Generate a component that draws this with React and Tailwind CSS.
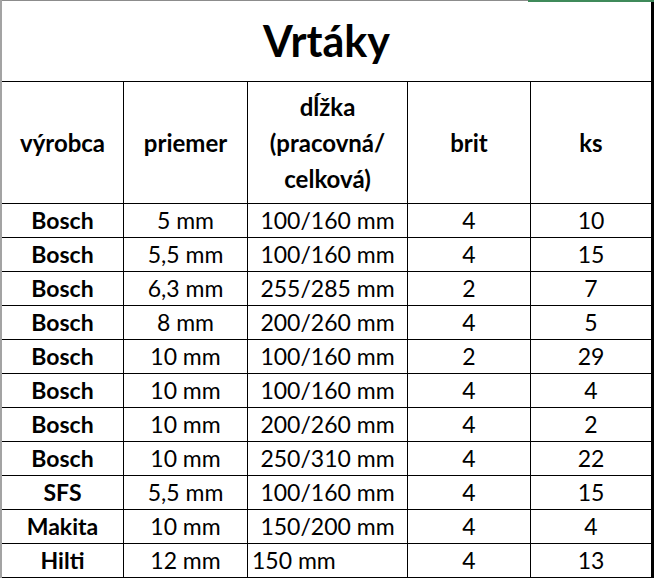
const COLS = 'grid grid-cols-[122px_124px_160px_123px_123px]'

const rows = [
  ['Bosch', '5 mm', '100/160 mm', '4', '10'],
  ['Bosch', '5,5 mm', '100/160 mm', '4', '15'],
  ['Bosch', '6,3 mm', '255/285 mm', '2', '7'],
  ['Bosch', '8 mm', '200/260 mm', '4', '5'],
  ['Bosch', '10 mm', '100/160 mm', '2', '29'],
  ['Bosch', '10 mm', '100/160 mm', '4', '4'],
  ['Bosch', '10 mm', '200/260 mm', '4', '2'],
  ['Bosch', '10 mm', '250/310 mm', '4', '22'],
  ['SFS', '5,5 mm', '100/160 mm', '4', '15'],
  ['Makita', '10 mm', '150/200 mm', '4', '4'],
  ['Hilti', '12 mm', '150 mm', '4', '13', true],
]

function Cell({ children, last, bold, left }) {
  return (
    <div
      className={
        'h-[34px] flex items-center border-b border-black ' +
        (last ? 'border-r-[3px] ' : 'border-r ') +
        (left ? 'justify-start pl-1 ' : 'justify-center ') +
        (bold ? 'font-bold' : 'font-normal')
      }
    >
      {children}
    </div>
  )
}

export default function App() {
  return (
    <div className="relative w-[654px] h-[578px] bg-white text-black font-['Lato','Noto_Sans',sans-serif] text-[23px] overflow-hidden">
      {/* výber v Exceli — zelený okraj hore vpravo */}
      <div className="absolute top-0 left-[528px] w-[126px] h-[2px] bg-[#3f8a5a]" />

      <div className="border-l-2 border-l-[#a3a3a3]">
        <div className="h-[82px] flex items-center justify-center border-t border-t-[#8c8c8c] border-b border-b-black border-r-[3px] border-r-black">
          <span className="text-[43px] font-bold leading-none pb-[2px]">Vrtáky</span>
        </div>

        <div className={COLS + ' font-bold text-[24px]'}>
          <div className="h-[122px] flex items-center justify-center border-r border-b border-black">výrobca</div>
          <div className="h-[122px] flex items-center justify-center border-r border-b border-black">priemer</div>
          <div className="h-[122px] flex flex-col items-center justify-center border-r border-b border-black leading-[36px]">
            <span>dĺžka</span>
            <span>(pracovná/</span>
            <span>celková)</span>
          </div>
          <div className="h-[122px] flex items-center justify-center border-r border-b border-black">brit</div>
          <div className="h-[122px] flex items-center justify-center border-r-[3px] border-b border-black">ks</div>
        </div>

        {rows.map((r, i) => (
          <div key={i} className={COLS}>
            <Cell bold>{r[0]}</Cell>
            <Cell>{r[1]}</Cell>
            <Cell left={r[5]}>{r[2]}</Cell>
            <Cell>{r[3]}</Cell>
            <Cell last>{r[4]}</Cell>
          </div>
        ))}
      </div>
    </div>
  )
}
